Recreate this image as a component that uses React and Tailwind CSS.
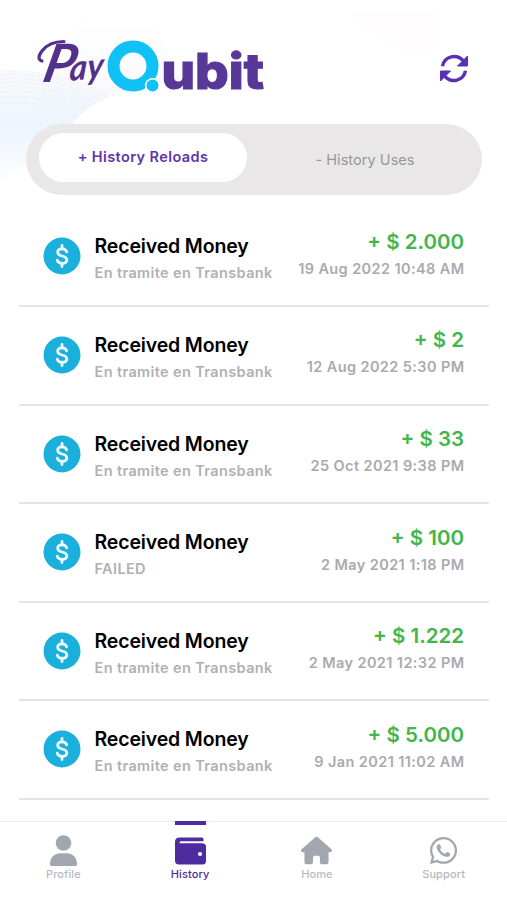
import { FaHouse, FaWhatsapp } from "react-icons/fa6";

const movements = [
  { id: 1, status: "En tramite en Transbank", amount: "2.000", date: "19 Aug 2022 10:48 AM" },
  { id: 2, status: "En tramite en Transbank", amount: "2", date: "12 Aug 2022 5:30 PM" },
  { id: 3, status: "En tramite en Transbank", amount: "33", date: "25 Oct 2021 9:38 PM" },
  { id: 4, status: "FAILED", amount: "100", date: "2 May 2021 1:18 PM" },
  { id: 5, status: "En tramite en Transbank", amount: "1.222", date: "2 May 2021 12:32 PM" },
  { id: 6, status: "En tramite en Transbank", amount: "5.000", date: "9 Jan 2021 11:02 AM" },
];

const tabs = [
  { label: "Profile", icon: ProfileIcon, iconClass: "h-[31px] w-[27px]" },
  { label: "History", icon: WalletIcon, iconClass: "h-[31px] w-[31px]", active: true },
  { label: "Home", icon: FaHouse, iconClass: "h-[31px] w-[31px]" },
  { label: "Support", icon: FaWhatsapp, iconClass: "h-[31px] w-[31px]" },
];

function ProfileIcon({ className }) {
  return (
    <svg className={className} viewBox="0 0 27 31" fill="currentColor">
      <circle cx="13.5" cy="8" r="7.8" />
      <path d="M0 29.5V28A10 10 0 0 1 10 18.2H17A10 10 0 0 1 27 28V29.5Q27 31 25.5 31H1.5Q0 31 0 29.5Z" />
    </svg>
  );
}

function WalletIcon({ className }) {
  return (
    <svg className={className} viewBox="0 0 31 31">
      <path
        d="M4.5 2.5H27Q28.5 2.5 28.5 4V6.2H6.5Q4.5 6.2 4.5 7.4Q4.5 8.3 6 8.3H27Q31 8.3 31 12V26Q31 29.5 27.5 29.5H4Q0 29.5 0 25.5V7Q0 2.5 4.5 2.5Z"
        fill="currentColor"
      />
      <circle cx="25" cy="19" r="2.1" fill="#fff" />
    </svg>
  );
}

function RefreshIcon() {
  return (
    <svg className="h-[29px] w-[30px]" viewBox="0 0 30 29">
      <g fill="none" stroke="currentColor" strokeWidth="3.4">
        <path d="M3.5 12.2A11.8 11.8 0 0 1 24.2 6.8" />
        <path d="M26.5 16.8A11.8 11.8 0 0 1 5.8 22.2" />
      </g>
      <g fill="currentColor" stroke="currentColor" strokeWidth="1" strokeLinejoin="round">
        <path d="M28.5 2V12H18.5Z" />
        <path d="M1.5 27V17H11.5Z" />
      </g>
    </svg>
  );
}

function Waves() {
  return (
    <svg className="absolute left-0 top-0 -z-10" width="507" height="210" viewBox="0 0 507 210">
      <defs>
        <linearGradient id="haze" x1="0" y1="0" x2="0" y2="1">
          <stop offset="0" stopColor="#f8fafc" />
          <stop offset="0.5" stopColor="#ecf5fd" />
          <stop offset="1" stopColor="#ffffff" />
        </linearGradient>
        <linearGradient id="blush" x1="0" y1="0" x2="0" y2="1">
          <stop offset="0" stopColor="#ffffff" />
          <stop offset="1" stopColor="#f7f5fa" />
        </linearGradient>
      </defs>
      <path d="M86 13H150L180 80L122 91Q92 100 72 124L40 120V80Z" fill="url(#blush)" />
      <path d="M0 71Q45 68 82 88L110 97Q88 105 72 124L30 160L0 185Z" fill="url(#haze)" />
      <g fill="none" stroke="#b9c9df" strokeWidth="0.6" strokeDasharray="1 2" opacity="0.5">
        <path d="M0 71Q55 68 108 95" />
        <path d="M0 75Q55 71 105 97" />
        <path d="M0 79Q55 75 100 100" />
        <path d="M0 83Q52 79 96 103" />
        <path d="M0 87Q50 83 91 106" />
        <path d="M0 92Q50 88 87 109" />
        <path d="M0 97Q48 94 82 113" />
        <path d="M0 103Q46 100 78 117" />
      </g>
      <path d="M350 13H434V48Q410 54 391 45Q378 30 366 26Z" fill="#fefcfd" />
    </svg>
  );
}

function Logo() {
  return (
    <svg className="h-[70px] w-[240px] overflow-visible" viewBox="0 0 240 70" role="img" aria-label="PayQubit">
      <g className="fill-[#53308c] font-['Lato',sans-serif] font-bold italic">
        <text transform="translate(9 51) skewX(-13)" className="text-[53px]">
          P
        </text>
        <text
          transform="translate(37 50) rotate(-6) skewX(-10)"
          textLength="34"
          lengthAdjust="spacingAndGlyphs"
          className="text-[35px]"
        >
          ay
        </text>
      </g>
      {/* flourish that sweeps over the wordmark */}
      <path
        d="M10 30Q4 28 10 20Q17 10.5 32 10.500"
        fill="none"
        stroke="#53308c"
        strokeWidth="3.2"
        strokeLinecap="round"
      />
      <circle cx="101" cy="35" r="19.5" fill="none" stroke="#10c1f5" strokeWidth="12" />
      <circle cx="120.5" cy="54.5" r="7.6" fill="#fff" />
      <circle cx="120.5" cy="54.5" r="6" fill="#10c1f5" />
      <text
        x="129.5"
        y="57.500"
        textLength="102.5"
        lengthAdjust="spacingAndGlyphs"
        stroke="#583798"
        strokeWidth="1.2"
        className="fill-[#583798] font-['Inter',sans-serif] text-[49px] font-extrabold"
      >
        ubit
      </text>
    </svg>
  );
}

function CoinIcon() {
  return (
    <svg className="size-[38px] shrink-0" viewBox="0 0 38 38">
      <circle cx="19" cy="19" r="18.5" fill="#1bafdc" />
      <g fill="none" stroke="#eefaff" strokeWidth="2.8" strokeLinecap="round" strokeLinejoin="round">
        <path d="M19 8.5V11.5M19 26.5V29.5" />
        <path d="M23.7 14.8Q22.8 11.9 19 11.9Q14.7 11.9 14.7 15.2Q14.7 18 19 19Q23.8 20 23.8 23Q23.8 26.3 19 26.3Q15 26.3 14.2 23.2" />
      </g>
    </svg>
  );
}

function MovementRow({ item }) {
  return (
    <li className="flex h-[98.6px] items-start border-b-2 border-[#e4e3e5] pl-[24px] pr-[25px] pt-[25px]">
      <div className="pt-[4px]">
        <CoinIcon />
      </div>
      <div className="ml-[13.5px] whitespace-nowrap">
        <p className="text-[19.5px] font-semibold leading-[27px] tracking-[-0.15px] text-black">Received Money</p>
        <p className="text-[14.5px] font-semibold leading-[26px] tracking-[0.37px] text-[#b0b1b5]">{item.status}</p>
      </div>
      <div className="-mt-[5.5px] ml-auto whitespace-nowrap text-right">
        <p className="text-[20.5px] font-semibold leading-[27px] text-[#42b649]">+ $ {item.amount}</p>
        <p className="-mr-[0.5px] text-[14.5px] font-semibold leading-[27px] tracking-[0.4px] text-[#a9aaae]">
          {item.date}
        </p>
      </div>
    </li>
  );
}

function TabBar() {
  return (
    <nav className="flex h-[79px] shrink-0 border-t border-[#ededef] bg-white">
      {tabs.map(({ label, icon: Icon, iconClass, active }) => (
        <button
          key={label}
          className={
            active
              ? "flex flex-1 flex-col items-center text-[#4f2ba0]"
              : "flex flex-1 flex-col items-center text-[#a2a6ae]"
          }
        >
          <span className={active ? "-mt-px h-[4px] w-[31px] bg-[#4f2ba0]" : "-mt-px h-[4px] w-[31px]"} />
          <Icon className={`mt-[9.5px] ${iconClass}`} />
          <span
            className={
              active
                ? "text-[11px] font-medium leading-[17px] tracking-[0.1px]"
                : "text-[11px] font-medium leading-[17px] tracking-[0.1px] text-[#b7b9be]"
            }
          >
            {label}
          </span>
        </button>
      ))}
    </nav>
  );
}

export default function App() {
  return (
    <main className="relative isolate flex h-[900px] w-[507px] flex-col overflow-hidden bg-white font-['Inter',sans-serif]">
      <Waves />

      <header className="flex h-[124px] shrink-0 items-start justify-between pl-[32px] pr-[38px] pt-[31px]">
        <Logo />
        <button className="mt-[23px] text-[#5931b5]" aria-label="Refresh">
          <RefreshIcon />
        </button>
      </header>

      <div className="ml-[26px] flex h-[71px] w-[456px] shrink-0 rounded-full bg-[#e9e7e8] px-[13px] pt-[9px]">
        <button className="h-[49px] w-[208px] rounded-full bg-white pb-[2px] text-[14.5px] font-semibold tracking-[0.4px] text-[#5f35a8]">
          + History Reloads
        </button>
        <button className="h-[54px] flex-1 pb-px pl-[14px] text-[14.5px] tracking-[0.05px] text-[#96979e]">
          - History Uses
        </button>
      </div>

      <ul className="ml-[19px] mt-[13.4px] w-[470px] flex-1 overflow-hidden">
        {movements.map((item) => (
          <MovementRow key={item.id} item={item} />
        ))}
      </ul>

      <TabBar />
    </main>
  );
}
